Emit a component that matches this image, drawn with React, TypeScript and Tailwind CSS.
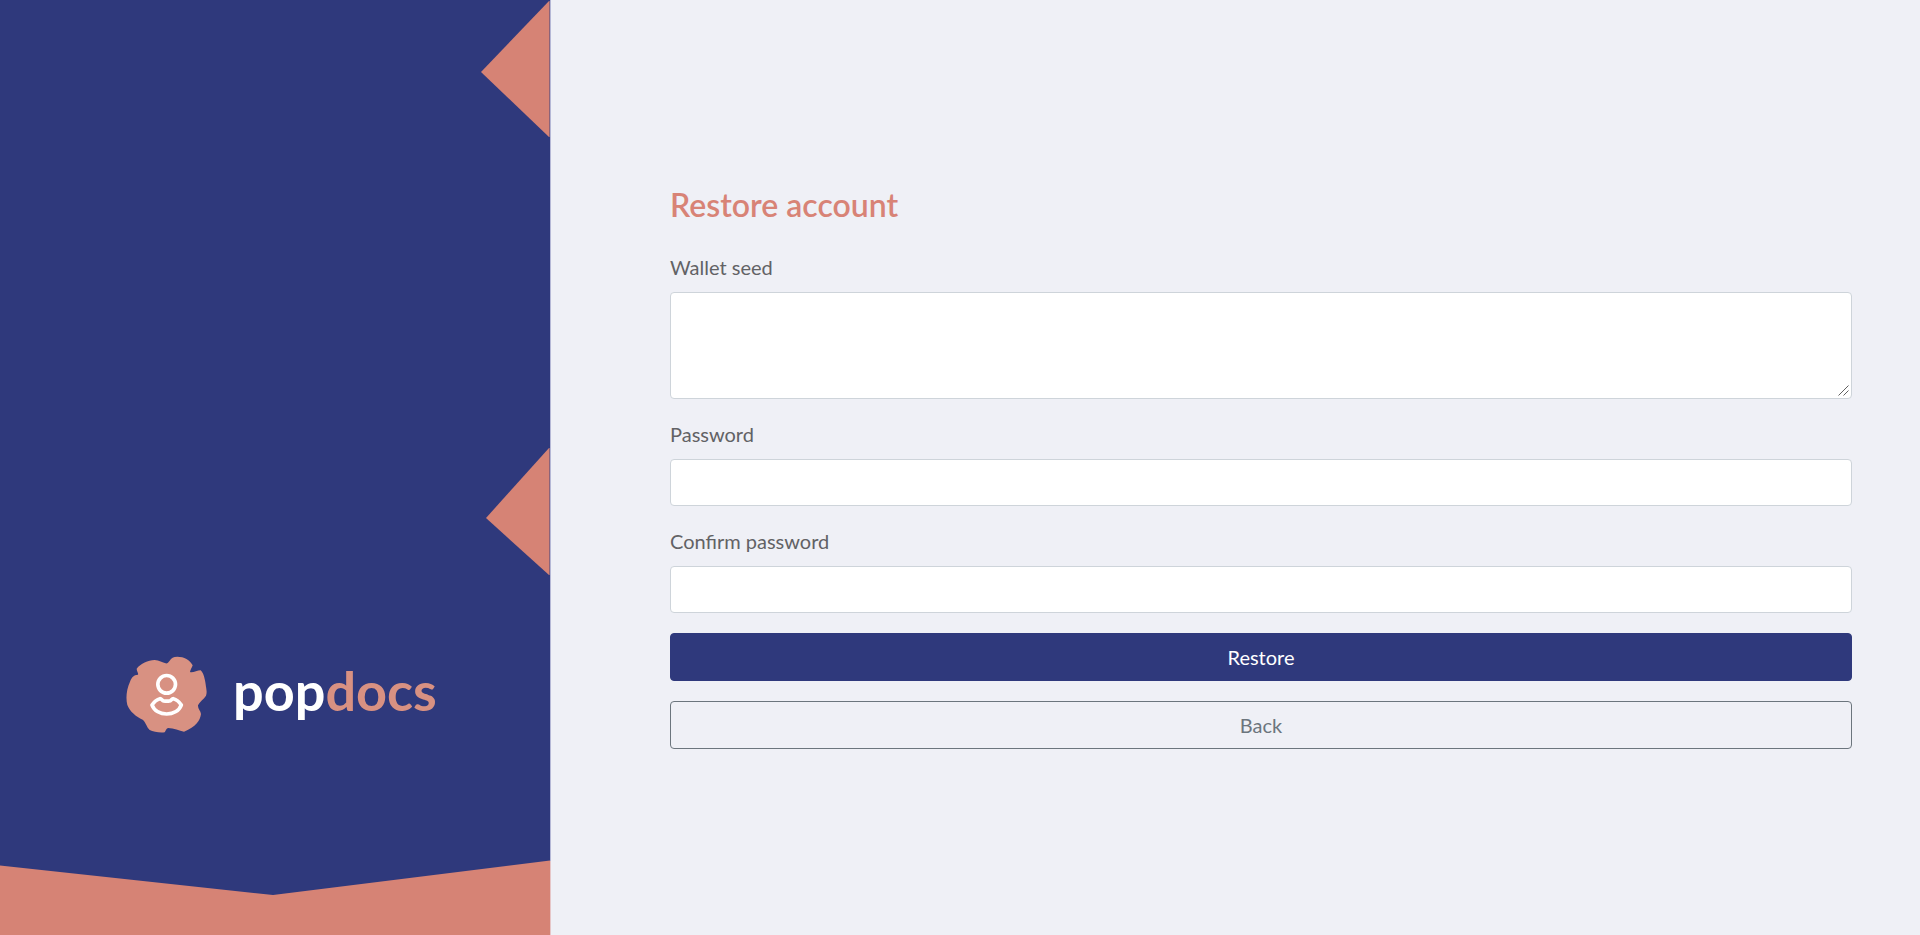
import React from 'react';

const fieldClass =
  'block w-full rounded border border-[#ced4da] bg-white px-3 text-xl text-[#495057] outline-none focus:border-[#2f397c]';
const labelClass = 'mb-[10px] block text-xl leading-[30px] text-[#626265]';
const buttonClass = 'block h-12 w-full cursor-pointer rounded border text-center text-xl';

function PanelArt() {
  return (
    <svg
      aria-hidden="true"
      className="absolute inset-0 h-full w-full"
      viewBox="0 0 551 935"
      preserveAspectRatio="none"
    >
      <rect width="550" height="935" fill="#2f397c" />
      <polygon points="549,1 481,72 549,137" fill="#d68375" />
      <polygon points="549,448 486,518 549,575" fill="#d68375" />
      <rect x="549" y="1" width="1" height="136" fill="#8c6278" />
      <rect x="549" y="448" width="1" height="127" fill="#8c6278" />
      <polygon points="0,865.5 273,895 550,860.5 550,935 0,935" fill="#d68375" />
      <rect x="550" width="1" height="861" fill="#b5b8d6" />
      <rect x="550" y="861" width="1" height="74" fill="#e6c6c8" />
    </svg>
  );
}

function LogoMark() {
  return (
    <svg aria-hidden="true" className="h-[77px] w-[81px] shrink-0" viewBox="48 46 243 231">
      <path
        d="M80 84C92 69 114 58 134 58C147 59 158 65 167 68C172 69 175 65 179 60C184 52 190 48 202 48C222 48 240 57 248 74C245 82 241 88 240 94C246 98 262 89 272 89C281 96 286 120 288 138C290 150 291 156 288 165C282 175 268 184 264 194C263 204 272 211 273 220C270 240 258 259 222 273C208 271 192 262 174 262C168 264 168 270 164 275C150 277 130 274 119 268C110 259 105 241 98 237C78 228 59 212 52 193C47 175 49 146 60 123C66 109 70 103 84 102C86 97 80 92 80 84Z"
        fill="#d89182"
      />
      <circle cx="170" cy="131" r="26.5" fill="none" stroke="#fff" strokeWidth="11" />
      <path
        d="M126 193C133 182 141 176 150 174C155 174 156 180 161 181Q170 182 179 181C184 180 185 174 190 174C199 176 207 182 214 193C207 211 189 220 170 220C151 220 133 211 126 193Z"
        fill="none"
        stroke="#fff"
        strokeWidth="11"
        strokeLinejoin="round"
      />
    </svg>
  );
}

function ResizeGrip() {
  return (
    <svg
      aria-hidden="true"
      className="pointer-events-none absolute right-[3px] bottom-[3px] h-[11px] w-[11px]"
      viewBox="0 0 11 11"
    >
      <path d="M0.5 10.5L10.500 0.5M5.500 10.500L10.500 5.500" stroke="#606060" strokeWidth="1" />
    </svg>
  );
}

export default function App() {
  return (
    <div className="flex min-h-screen bg-[#eff0f6] font-['Lato','Open_Sans',sans-serif]">
      <aside className="relative flex w-[551px] shrink-0 flex-col justify-end pb-[202px] pl-[126px]">
        <PanelArt />
        <div className="relative flex items-center gap-[26px]">
          <LogoMark />
          <p className="pb-2 text-[54px] leading-[60px] font-bold text-white">
            pop<span className="text-[#d89182]">docs</span>
          </p>
        </div>
      </aside>

      <main className="flex flex-1 flex-col justify-center pr-[68px] pl-[119px]">
        <h1 className="mb-[28px] text-[32px] leading-[38px] font-semibold text-[#d88376]">Restore account</h1>
        <form className="flex flex-col gap-5" onSubmit={(e) => e.preventDefault()}>
          <div>
            <label htmlFor="seed" className={labelClass}>
              Wallet seed
            </label>
            <div className="relative">
              <textarea
                id="seed"
                className={`${fieldClass} h-[107px] resize-y py-2 [&::-webkit-resizer]:hidden`}
              />
              <ResizeGrip />
            </div>
          </div>
          <div>
            <label htmlFor="password" className={labelClass}>
              Password
            </label>
            <input id="password" type="password" className={`${fieldClass} h-[47px]`} />
          </div>
          <div>
            <label htmlFor="confirm" className={labelClass}>
              Confirm password
            </label>
            <input id="confirm" type="password" className={`${fieldClass} h-[47px]`} />
          </div>
          <button type="submit" className={`${buttonClass} border-[#2f397c] bg-[#2f397c] text-white`}>
            Restore
          </button>
          <button type="button" className={`${buttonClass} border-[#6c757d] text-[#6c757d]`}>
            Back
          </button>
        </form>
      </main>
    </div>
  );
}
